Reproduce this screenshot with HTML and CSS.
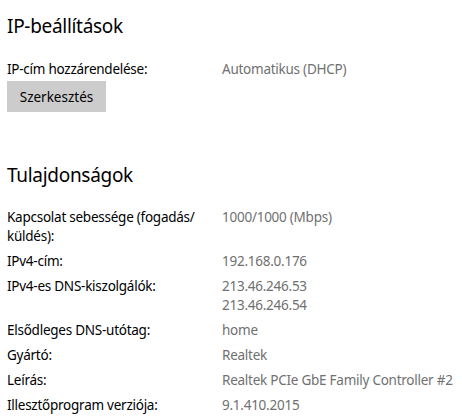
FILE: index.html
```html
<!DOCTYPE html>
<html lang="hu">
<head>
<meta charset="utf-8">
<title>IP-beállítások</title>
<link rel="stylesheet" href="styles.css">
</head>
<body>
<section class="group">
  <h2 class="title">IP-beállítások</h2>
  <div class="row">
    <span class="label">IP-cím hozzárendelése:</span>
    <span class="value">Automatikus (DHCP)</span>
  </div>
  <button class="btn" type="button">Szerkesztés</button>
</section>
<section class="group props">
  <h2 class="title">Tulajdonságok</h2>
  <div class="list">
    <div class="row">
      <span class="label">Kapcsolat sebessége (fogadás/<wbr>küldés):</span>
      <span class="value">1000/1000 (Mbps)</span>
    </div>
    <div class="row">
      <span class="label">IPv4-cím:</span>
      <span class="value">192.168.0.176</span>
    </div>
    <div class="row">
      <span class="label">IPv4-es DNS-kiszolgálók:</span>
      <span class="value">213.46.246.53<br>213.46.246.54</span>
    </div>
    <div class="row">
      <span class="label">Elsődleges DNS-utótag:</span>
      <span class="value">home</span>
    </div>
    <div class="row">
      <span class="label">Gyártó:</span>
      <span class="value">Realtek</span>
    </div>
    <div class="row">
      <span class="label">Leírás:</span>
      <span class="value">Realtek PCIe GbE Family Controller #2</span>
    </div>
    <div class="row">
      <span class="label">Illesztőprogram verziója:</span>
      <span class="value">9.1.410.2015</span>
    </div>
  </div>
</section>
</body>
</html>
```
FILE: styles.css
```css
html, body {
  margin: 0;
  background: #ffffff;
}
body {
  padding: 12px 0 0 7px;
  font-family: "Noto Sans", "Open Sans", sans-serif;
  font-size: 13.5px;
  letter-spacing: -0.25px;
  color: #000000;
}
.group {
  display: flex;
  flex-direction: column;
  align-items: flex-start;
}
.title {
  margin: 0;
  font-size: 19px;
  letter-spacing: -0.3px;
  font-weight: 400;
  line-height: 28px;
}
.group > .row {
  margin-top: 20px;
}
.row {
  display: grid;
  grid-template-columns: 215px auto;
  line-height: 19px;
}
.label {
  padding-right: 12px;
}
.value {
  color: #707070;
  white-space: nowrap;
}
.btn {
  margin-top: 2px;
  width: 99px;
  height: 31px;
  border: 0;
  padding: 0;
  background: #cccccc;
  font: inherit;
  color: #000000;
}
.props {
  margin-top: 49px;
}
.list {
  margin-top: 19px;
  display: flex;
  flex-direction: column;
  gap: 6px;
}
```
